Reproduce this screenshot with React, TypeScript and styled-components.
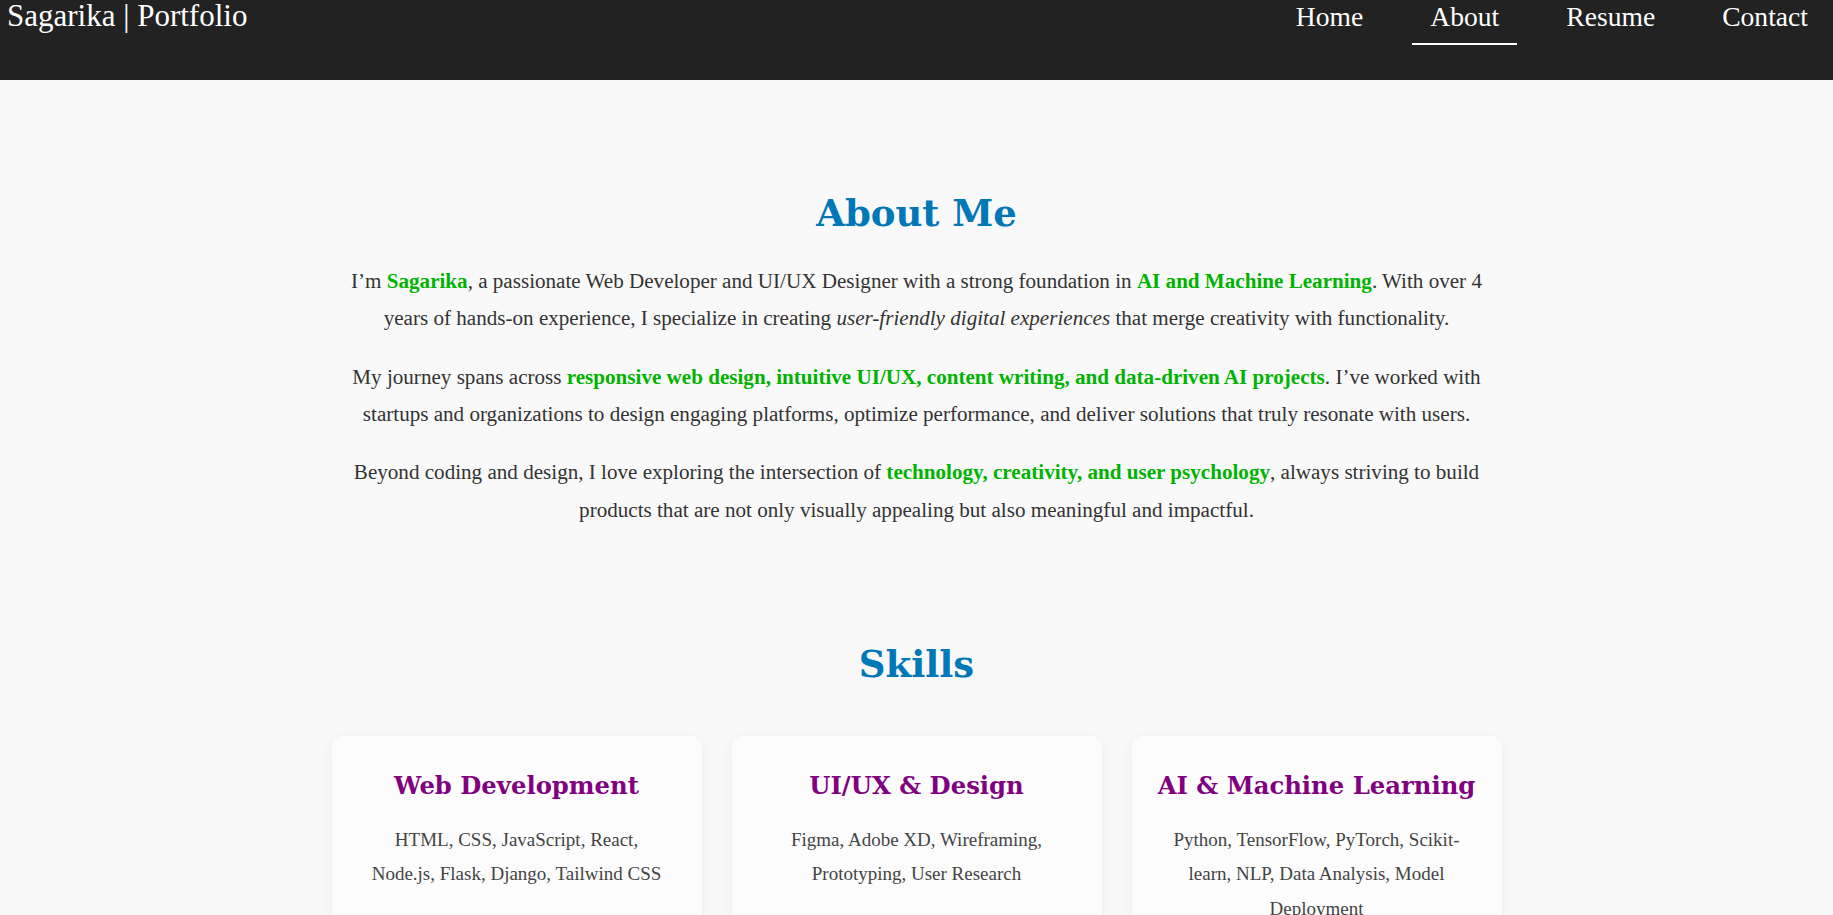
import React from "react";
import styled, { createGlobalStyle } from "styled-components";

const GlobalStyle = createGlobalStyle`
  html, body {
    margin: 0;
    padding: 0;
    background: #f9f9f9;
    font-family: "Liberation Serif", "Times New Roman", serif;
    color: #333;
  }
  * { box-sizing: border-box; }
`;

const Header = styled.header`
  height: 80px;
  background: #222;
  display: flex;
  justify-content: space-between;
  align-items: flex-start;
  padding: 0 7px;
`;

const Logo = styled.div`
  color: #fff;
  font-size: 31px;
  line-height: 1;
`;

const Nav = styled.nav`
  display: flex;
  gap: 31px;
`;

const NavLink = styled.a<{ $active?: boolean }>`
  color: #fff;
  text-decoration: none;
  font-size: 27.6px;
  line-height: normal;
  padding: 1px 18px 10px;
  border-bottom: 2px solid ${(p) => (p.$active ? "#fff" : "transparent")};
`;

const Main = styled.main`
  max-width: 1170px;
  margin: 0 auto;
  padding-top: 109px;
`;

const Section = styled.section<{ $gapAfter?: number }>`
  text-align: center;
  margin-bottom: ${(p) => p.$gapAfter ?? 0}px;
`;

const SectionTitle = styled.h2`
  font-family: "DejaVu Serif", Georgia, serif;
  font-weight: bold;
  font-size: 37px;
  line-height: 48px;
  color: #0077b6;
  margin: 0 0 26px;
`;

const Para = styled.p`
  font-size: 21.1px;
  line-height: 37.4px;
  margin: 0 0 20.8px;
  &:last-child { margin-bottom: 0; }
`;

const Hl = styled.strong`
  color: #00b300;
`;

const Grid = styled.div`
  display: grid;
  grid-template-columns: repeat(3, 1fr);
  gap: 30px;
  margin-top: 48px;
`;

const Card = styled.div`
  background: #fcfcfc;
  border-radius: 12px;
  box-shadow: 0 4px 16px rgba(0, 0, 0, 0.06);
  padding: 36px 32px 32px;
  text-align: center;
`;

const CardTitle = styled.h3`
  font-family: "DejaVu Serif", Georgia, serif;
  font-weight: bold;
  font-size: 24.3px;
  line-height: 28.8px;
  white-space: nowrap;
  color: #800080;
  margin: 0 -12px 22px;
`;

const CardText = styled.p`
  font-size: 19px;
  line-height: 34.5px;
  color: #444;
  margin: 0;
`;

const skills = [
  {
    title: "Web Development",
    text: "HTML, CSS, JavaScript, React, Node.js, Flask, Django, Tailwind CSS",
  },
  {
    title: "UI/UX & Design",
    text: "Figma, Adobe XD, Wireframing, Prototyping, User Research",
  },
  {
    title: "AI & Machine Learning",
    text: "Python, TensorFlow, PyTorch, Scikit-learn, NLP, Data Analysis, Model Deployment",
  },
];

export default function App() {
  return (
    <>
      <GlobalStyle />
      <Header>
        <Logo>Sagarika | Portfolio</Logo>
        <Nav>
          <NavLink href="#">Home</NavLink>
          <NavLink href="#" $active>
            About
          </NavLink>
          <NavLink href="#">Resume</NavLink>
          <NavLink href="#">Contact</NavLink>
        </Nav>
      </Header>
      <Main>
        <Section $gapAfter={111}>
          <SectionTitle>About Me</SectionTitle>
          <Para>
            I’m <Hl>Sagarika</Hl>, a passionate Web Developer and UI/UX Designer with a strong
            foundation in <Hl>AI and Machine Learning</Hl>. With over 4 years of hands-on
            experience, I specialize in creating <em>user-friendly digital experiences</em> that
            merge creativity with functionality.
          </Para>
          <Para>
            My journey spans across{" "}
            <Hl>responsive web design, intuitive UI/UX, content writing, and data-driven AI projects</Hl>
            . I’ve worked with startups and organizations to design engaging platforms, optimize
            performance, and deliver solutions that truly resonate with users.
          </Para>
          <Para>
            Beyond coding and design, I love exploring the intersection of{" "}
            <Hl>technology, creativity, and user psychology</Hl>, always striving to build products
            that are not only visually appealing but also meaningful and impactful.
          </Para>
        </Section>
        <Section>
          <SectionTitle>Skills</SectionTitle>
          <Grid>
            {skills.map((s) => (
              <Card key={s.title}>
                <CardTitle>{s.title}</CardTitle>
                <CardText>{s.text}</CardText>
              </Card>
            ))}
          </Grid>
        </Section>
      </Main>
    </>
  );
}
